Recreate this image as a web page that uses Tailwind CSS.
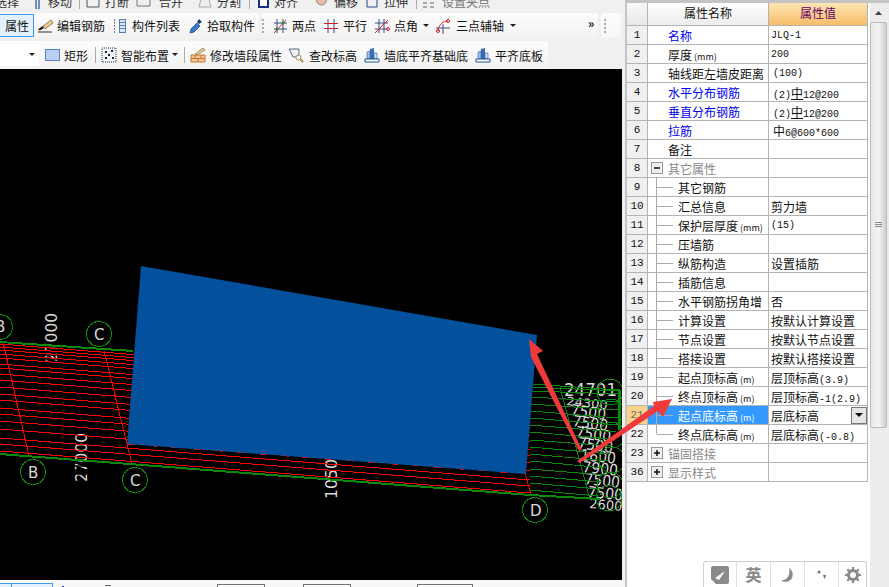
<!DOCTYPE html>
<html><head><meta charset="utf-8"><script src="https://cdn.jsdelivr.net/npm/@tailwindcss/browser@4"></script></head>
<body>
<div class="relative w-[889px] h-[587px] overflow-hidden flex bg-[#f0f0f0] font-['Noto_Sans_CJK_SC',sans-serif] text-[12px] leading-[19px] text-[#111]">

<!-- LEFT -->
<div class="w-[625px] h-full flex flex-col">
  <!-- clipped row -->
  <div class="h-[11px] pb-[2px] flex items-end overflow-hidden whitespace-nowrap leading-[14px] text-[#333]">
    <span class="w-[19px] shrink-0 flex justify-end">选择</span>
    <svg class="ml-[16px] shrink-0" width="6" height="14"><path d="M1 0v14M4 0v14" stroke="#6a8fc0" stroke-width="2"/></svg>
    <span class="ml-[7px]">移动</span>
    <i class="ml-[7px] w-px h-[11px] bg-[#aaa]"></i>
    <svg class="ml-[6px] shrink-0" width="14" height="14"><path d="M1 0v12h12V0" fill="none" stroke="#555"/></svg>
    <span class="ml-[5px]">打断</span>
    <svg class="ml-[6px] shrink-0" width="17" height="14"><path d="M2 0v11h13V0" fill="none" stroke="#777"/></svg>
    <span class="ml-[7px]">合并</span>
    <svg class="ml-[14px] shrink-0" width="16" height="14"><path d="M2 12h12L11 0H5z" fill="#eee" stroke="#aaa"/></svg>
    <span class="ml-[4px]">分割</span>
    <i class="ml-[8px] w-px h-[11px] bg-[#aaa]"></i>
    <svg class="ml-[8px] shrink-0" width="11" height="14"><path d="M1 0v12h9V0" fill="#fff" stroke="#1b2f80" stroke-width="2"/></svg>
    <span class="ml-[5px]">对齐</span>
    <svg class="ml-[18px] shrink-0" width="11" height="14"><circle cx="5.500" cy="5" r="5" fill="#e9b9a9" stroke="#888"/></svg>
    <span class="ml-[7px]">偏移</span>
    <svg class="ml-[8px] shrink-0" width="12" height="14"><path d="M1 0v12h10V0" fill="none" stroke="#224a80"/></svg>
    <span class="ml-[6px]">拉伸</span>
    <i class="ml-[8px] w-px h-[11px] bg-[#aaa]"></i>
    <svg class="ml-[5px] shrink-0" width="18" height="14"><path d="M1 8h4M8 8h4M1 12h4M8 12h4" stroke="#aaa" stroke-width="2"/></svg>
    <span class="ml-[2px] text-[#777]">设置夹点</span>
  </div>

  <!-- row 1 -->
  <div class="mt-[2px] h-[25px] flex whitespace-nowrap">
    <div class="w-[259px] h-full flex items-center rounded-r-[3px] bg-gradient-to-b from-[#fdfdfd] to-[#f2f2f2]">
      <div class="w-[34px] h-[23px] flex items-center pl-[5px] border border-l-0 border-[#3f9af2] bg-[#e4f1fc]">属性</div>
      <svg class="ml-[3px] shrink-0" width="17" height="16" viewBox="0 0 17 16"><path d="M1 12c3 1 4-1 6-2l-1-2c-2 1-4 2-5 4z" fill="#222"/><path d="M6 8l8-6 2 3-8 6z" fill="#e9c896" stroke="#8a6a40" stroke-width=".8"/><path d="M1 14h14" stroke="#333"/></svg>
      <span class="ml-[3px]">编辑钢筋</span>
      <svg class="ml-[8px] shrink-0" width="14" height="16" viewBox="0 0 14 16"><path d="M1 2h2M1 5h2M1 8h2M1 11h2M1 14h2" stroke="#555" stroke-width="1.500" stroke-dasharray="1 1"/><rect x="6.500" y="1.500" width="6" height="13" fill="#dbe8f7" stroke="#5a7fb0"/><path d="M7 4.500h5M7 7.500h5M7 10.500h5" stroke="#5a7fb0"/></svg>
      <span class="ml-[5px]">构件列表</span>
      <svg class="ml-[9px] shrink-0" width="14" height="16" viewBox="0 0 14 16"><path d="M1 15l1-4 6-6 3 3-6 6z" fill="#3a78c8" stroke="#1c4a90" stroke-width=".8"/><path d="M8 4l2-3 3 3-3 2z" fill="#1c3a70"/></svg>
      <span class="ml-[4px]">拾取构件</span>
    </div>
    <div class="ml-[3px] w-[336px] h-full flex items-center rounded-[3px] bg-gradient-to-b from-[#fdfdfd] to-[#f2f2f2]">
      <i class="w-[2px] h-[14px] border-l-2 border-dotted border-[#aaa]"></i>
      <svg class="ml-[9px] shrink-0" width="15" height="16" viewBox="0 0 15 16"><path d="M4 1v14M10 1v14M1 5h13M1 11h13" stroke="#3b4a80"/><path d="M1 15L13 2" stroke="#e02020"/><circle cx="10" cy="5" r="1.500" fill="#2a8a2a"/><circle cx="4" cy="11" r="1.500" fill="#2a8a2a"/></svg>
      <span class="ml-[4px]">两点</span>
      <svg class="ml-[8px] shrink-0" width="14" height="16" viewBox="0 0 14 16"><path d="M4 1v14M10 1v14" stroke="#3b4a90"/><path d="M0 5.500h14M0 10.500h14" stroke="#d02020"/></svg>
      <span class="ml-[5px]">平行</span>
      <svg class="ml-[8px] shrink-0" width="15" height="16" viewBox="0 0 15 16"><path d="M4 1v14M9 1v14M0 5h13M0 11h13" stroke="#3b4a80"/><path d="M0 15L13 2" stroke="#e02020"/><circle cx="13" cy="11" r="1.500" fill="none" stroke="#e02020"/></svg>
      <span class="ml-[4px]">点角</span>
      <svg class="ml-[5px] shrink-0" width="7" height="4"><path d="M0 0h6l-3 3z" fill="#222"/></svg>
      <svg class="ml-[6px] shrink-0" width="15" height="16" viewBox="0 0 15 16"><path d="M2 13C3 6 7 3 12 3" fill="none" stroke="#d02020"/><circle cx="2" cy="13" r="1.500" fill="none" stroke="#d02020"/><circle cx="12" cy="3" r="1.500" fill="none" stroke="#d02020"/><path d="M7 6v10M0 10h14" stroke="#3b4a80"/></svg>
      <span class="ml-[5px]">三点辅轴</span>
      <svg class="ml-[6px] shrink-0" width="7" height="4"><path d="M0 0h6l-3 3z" fill="#222"/></svg>
      <span class="ml-[71px] mb-[5px] text-[12px] font-bold leading-none">»</span>
    </div>
    <div class="ml-[3px] w-[20px] h-full flex items-center pl-[3px] rounded-[3px] bg-gradient-to-b from-[#fdfdfd] to-[#f6f6f6]">
      <i class="w-[2px] h-[14px] border-l-2 border-dotted border-[#aaa]"></i>
    </div>
  </div>

  <!-- row 2 -->
  <div class="mt-[3px] h-[28px] flex whitespace-nowrap">
    <div class="w-[548px] h-full flex items-center rounded-r-[3px] bg-gradient-to-b from-[#fdfdfd] to-[#f2f2f2]">
      <div class="w-[39px] h-[22px] flex items-center justify-end pr-[3px] bg-white"><svg width="7" height="4"><path d="M0 0h6l-3 3z" fill="#222"/></svg></div>
      <svg class="ml-[6px] shrink-0" width="15" height="12"><rect x=".5" y=".5" width="14" height="11" fill="#b9d0f2" stroke="#5b7fc0"/></svg>
      <span class="ml-[4px]">矩形</span>
      <i class="ml-[7px] w-px h-[16px] bg-[#aaa]"></i>
      <svg class="ml-[5px] shrink-0" width="16" height="16" viewBox="0 0 16 16"><rect x="1" y="1" width="14" height="14" fill="#eef3fa" stroke="#333" stroke-dasharray="1 1"/><path d="M4 5h2M10 4h2M7 8h2M4 11h2M11 11h2" stroke="#222" stroke-width="2"/></svg>
      <span class="ml-[4px]">智能布置</span>
      <svg class="ml-[3px] shrink-0" width="7" height="4"><path d="M0 0h6l-3 3z" fill="#222"/></svg>
      <i class="ml-[5px] w-px h-[16px] bg-[#aaa]"></i>
      <svg class="ml-[5px] shrink-0" width="16" height="16" viewBox="0 0 16 16"><path d="M1 8h14v7H1z" fill="#f2c79a" stroke="#c8752a"/><path d="M1 11.500h14M5 8v3.500M11 8v3.500M8 11.500V15" stroke="#c8752a"/><path d="M5 7l8-6 2 2-8 5z" fill="#e4cf9a" stroke="#8a7040" stroke-width=".7"/></svg>
      <span class="ml-[4px]">修改墙段属性</span>
      <svg class="ml-[6px] shrink-0" width="16" height="16" viewBox="0 0 16 16"><path d="M1 2h10v5l-3 3H5z" fill="#eef2f7" stroke="#5a6a80"/><circle cx="10.500" cy="10.500" r="2.500" fill="#fff" stroke="#a08850"/><path d="M12.500 12.500l2.500 2.500" stroke="#b08a40" stroke-width="2"/></svg>
      <span class="ml-[5px]">查改标高</span>
      <svg class="ml-[7px] shrink-0" width="16" height="16" viewBox="0 0 16 16"><path d="M6 2l4-1v11H6z" fill="#3a6fb8"/><path d="M3 5l3-1v8H3z" fill="#9cc0e8" stroke="#2a5a9a" stroke-width=".6"/><path d="M10 6h3v6h-3z" fill="#cfe0f4" stroke="#2a5a9a" stroke-width=".6"/><path d="M1 15v-3h14v3z" fill="#fff" stroke="#1f4f90"/></svg>
      <span class="ml-[4px]">墙底平齐基础底</span>
      <svg class="ml-[7px] shrink-0" width="16" height="16" viewBox="0 0 16 16"><path d="M6 2l4-1v11H6z" fill="#3a6fb8"/><path d="M3 5l3-1v8H3z" fill="#9cc0e8" stroke="#2a5a9a" stroke-width=".6"/><path d="M10 6h3v6h-3z" fill="#cfe0f4" stroke="#2a5a9a" stroke-width=".6"/><path d="M1 15v-3h14v3z" fill="#fff" stroke="#1f4f90"/></svg>
      <span class="ml-[4px]">平齐底板</span>
    </div>
  </div>

  <!-- canvas -->
  <div class="flex-1 mr-[3px] bg-black overflow-hidden">
    <svg width="622" height="511" viewBox="0 69 622 511" class="block">
      <g fill="#d9d9d9" font-family="'DejaVu Sans',sans-serif">
        <text transform="translate(57,362) rotate(-90)" font-size="16" textLength="49" lengthAdjust="spacingAndGlyphs">27000</text>
        <text transform="translate(87,482) rotate(-90)" font-size="16" textLength="49" lengthAdjust="spacingAndGlyphs">27000</text>
        <text transform="translate(337,499) rotate(-90)" font-size="16" textLength="40" lengthAdjust="spacingAndGlyphs">1050</text>
        <text x="564" y="396" font-size="17" textLength="53" lengthAdjust="spacingAndGlyphs">24701</text>
        <text transform="translate(566,405) rotate(6) scale(1,.9)" font-size="13">24300</text>
        <text transform="translate(570,415) rotate(8) scale(1,1.100)" font-size="14">7500</text>
        <text transform="translate(572,426) rotate(8) scale(1,1.100)" font-size="14">7500</text>
        <text transform="translate(575,437) rotate(8) scale(1,1.100)" font-size="14">7500</text>
        <text transform="translate(577,448) rotate(8) scale(1,1.100)" font-size="14">7500</text>
        <text transform="translate(580,460) rotate(6) scale(1,1.100)" font-size="14">1600</text>
        <text transform="translate(582,472) rotate(6) scale(1,1.100)" font-size="14">7900</text>
        <text transform="translate(584,484) rotate(6) scale(1,1.100)" font-size="14">7500</text>
        <text transform="translate(587,497) rotate(6) scale(1,1.100)" font-size="14">7500</text>
        <text transform="translate(589,508) rotate(5)" font-size="13">2600</text>
      </g>
      <path d="M44 347h16M44 351h16M44 355h16M44 359h16M74 466h16M74 470h16M74 474h16" stroke="#000" stroke-width="1.500"/>
      <g stroke="#ff0000" stroke-width="1" shape-rendering="crispEdges" fill="none">
        <path d="M0 344L530 386M0 347L530 389M0 350L530 392M0 354L530 396M0 358L530 400M0 364L530 406M0 368L530 410M0 374L530 416M0 380L530 422M0 387L530 429M0 394L530 436M0 400L530 442M0 408L530 450M0 414L530 456M0 421L530 463M0 429L530 471M0 438L530 480M0 444L530 486M0 451L530 493"/>
        <path d="M3 342L29 456M104 351L132 464M524 470L531 494"/>
        <path d="M127 444L526 474" stroke-dasharray="8 14"/>
      </g>
      <g stroke="#0a8a0a" fill="none" shape-rendering="crispEdges">
        <path d="M0 342L133 351" stroke-width="2"/>
        <path d="M0 454L530 495L600 499" stroke-width="2"/>
        <path d="M530 384L620 390M530 387L620 391M530 391L620 394M530 397L620 402M530 404L618 410M530 411L618 418M530 418L618 425M530 425L616 432M530 432L612 439M530 440L612 446M530 447L610 454M530 454L608 461M530 461L606 468M530 469L604 475M530 476L602 482M530 483L600 489M530 490L598 496" stroke-width="1"/>
        <path d="M560 387L590 500"/>
        <circle cx="0" cy="327" r="12.500"/><circle cx="99" cy="334" r="12.500"/>
        <circle cx="33" cy="472" r="12.500"/><circle cx="135" cy="480" r="12.500"/>
        <circle cx="535" cy="510" r="12.500"/>
        <circle cx="610" cy="392" r="13"/><circle cx="611" cy="412" r="13"/><circle cx="612" cy="435" r="13"/><circle cx="612" cy="460" r="13"/><circle cx="610" cy="485" r="13"/><circle cx="609" cy="498" r="13"/>
      </g>
      <path d="M618 390h3v40h-3z" fill="#0a8a0a"/>
      <polygon points="141,266 537,335 526,474 127,444" fill="#03509c"/>
      <g fill="#d9d9d9" font-family="'DejaVu Sans',sans-serif">
        <text x="-5" y="332" font-size="15">B</text>
        <text x="94" y="340" font-size="15">C</text>
        <text x="28" y="478" font-size="15">B</text>
        <text x="130" y="486" font-size="15">C</text>
        <text x="530" y="516" font-size="15">D</text>
      </g>
    </svg>
  </div>

  <!-- bottom strip -->
  <div class="h-[7px] flex overflow-hidden bg-[#f8f8f8]">
    <div class="mt-[3px] w-[53px] h-[4px] flex border-t border-r border-[#3f9af2] bg-[#e4f1fc]"><i class="ml-[11px] w-px bg-[#3f9af2]"></i></div>
    <i class="ml-[9px] mt-[6px] w-[2px] h-px bg-[#1c4fc0]"></i>
    <i class="ml-[41px] mt-[5px] w-[6px] h-px bg-[#666]"></i>
    <div class="ml-[106px] mt-[4px] w-[48px] h-[3px] border border-b-0 border-[#707070] bg-white"></div>
    <div class="ml-[38px] mt-[4px] w-[48px] h-[3px] border border-b-0 border-[#707070] bg-white"></div>
    <div class="ml-[66px] mt-[4px] w-[56px] h-[3px] border border-b-0 border-[#707070] bg-white"></div>
  </div>
</div>

<!-- RIGHT -->
<div class="w-[264px] h-full flex bg-white border-l-2 border-[#c4c4c4] border-t-[3px]">
  <div class="w-[241px] flex flex-col">
    <div class="h-[23px] flex border-b border-[#b4b4b4]">
      <div class="w-[21px] border-r border-[#b4b4b4] bg-gradient-to-b from-[#f8f8f8] to-[#e8e8e8]"></div>
      <div class="w-[121px] border-r border-[#b4b4b4] text-center bg-gradient-to-b from-white to-[#ececec]">属性名称</div>
      <div class="w-[99px] border-r border-[#b4b4b4] text-center text-[#660066] bg-gradient-to-b from-[#fde6b2] to-[#f5bd68]">属性值</div>
    </div>
    <!-- rows -->
    <div class="h-[19px] flex border-b border-[#b4b4b4]"><div class="w-[21px] border-r border-[#b4b4b4] bg-[#f0f0f0] text-center font-['Liberation_Mono',monospace] text-[11px]">1</div><div class="w-[121px] pl-[20px] border-r border-[#b4b4b4] text-[#0000ee]">名称</div><div class="w-[99px] pl-[2px] border-r border-[#b4b4b4] font-['Liberation_Mono',monospace] text-[10px]">JLQ-1</div></div>
    <div class="h-[19px] flex border-b border-[#b4b4b4]"><div class="w-[21px] border-r border-[#b4b4b4] bg-[#f0f0f0] text-center font-['Liberation_Mono',monospace] text-[11px]">2</div><div class="w-[121px] pl-[20px] border-r border-[#b4b4b4]">厚度<span class="text-[9px] ml-[2px]">(mm)</span></div><div class="w-[99px] pl-[2px] border-r border-[#b4b4b4] font-['Liberation_Mono',monospace] text-[10px]">200</div></div>
    <div class="h-[19px] flex border-b border-[#b4b4b4]"><div class="w-[21px] border-r border-[#b4b4b4] bg-[#f0f0f0] text-center font-['Liberation_Mono',monospace] text-[11px]">3</div><div class="w-[121px] pl-[20px] border-r border-[#b4b4b4] whitespace-nowrap">轴线距左墙皮距离</div><div class="w-[99px] pl-[4px] border-r border-[#b4b4b4] font-['Liberation_Mono',monospace] text-[10px]">(100)</div></div>
    <div class="h-[19px] flex border-b border-[#b4b4b4]"><div class="w-[21px] border-r border-[#b4b4b4] bg-[#f0f0f0] text-center font-['Liberation_Mono',monospace] text-[11px]">4</div><div class="w-[121px] pl-[20px] border-r border-[#b4b4b4] text-[#0000ee]">水平分布钢筋</div><div class="w-[99px] pl-[4px] border-r border-[#b4b4b4] font-['Liberation_Mono',monospace] text-[10px]">(2)<span class="text-[12px] underline font-['Noto_Sans_CJK_SC']">中</span>12@200</div></div>
    <div class="h-[19px] flex border-b border-[#b4b4b4]"><div class="w-[21px] border-r border-[#b4b4b4] bg-[#f0f0f0] text-center font-['Liberation_Mono',monospace] text-[11px]">5</div><div class="w-[121px] pl-[20px] border-r border-[#b4b4b4] text-[#0000ee]">垂直分布钢筋</div><div class="w-[99px] pl-[4px] border-r border-[#b4b4b4] font-['Liberation_Mono',monospace] text-[10px]">(2)<span class="text-[12px] underline font-['Noto_Sans_CJK_SC']">中</span>12@200</div></div>
    <div class="h-[19px] flex border-b border-[#b4b4b4]"><div class="w-[21px] border-r border-[#b4b4b4] bg-[#f0f0f0] text-center font-['Liberation_Mono',monospace] text-[11px]">6</div><div class="w-[121px] pl-[20px] border-r border-[#b4b4b4] text-[#0000ee]">拉筋</div><div class="w-[99px] pl-[4px] border-r border-[#b4b4b4] font-['Liberation_Mono',monospace] text-[10px]"><span class="text-[12px] font-['Noto_Sans_CJK_SC']">中</span>6@600*600</div></div>
    <div class="h-[19px] flex border-b border-[#b4b4b4]"><div class="w-[21px] border-r border-[#b4b4b4] bg-[#f0f0f0] text-center font-['Liberation_Mono',monospace] text-[11px]">7</div><div class="w-[121px] pl-[20px] border-r border-[#b4b4b4]">备注</div><div class="w-[99px] border-r border-[#b4b4b4]"></div></div>
    <div class="h-[19px] flex border-b border-[#b4b4b4]"><div class="w-[21px] border-r border-[#b4b4b4] bg-[#f0f0f0] text-center font-['Liberation_Mono',monospace] text-[11px]">8</div><div class="relative w-[121px] pl-[20px] border-r border-[#b4b4b4] text-[#888]"><svg class="absolute left-[3px] top-[3px]" width="12" height="12"><rect x=".5" y=".5" width="11" height="11" fill="#eee" stroke="#999"/><path d="M3 6h6" stroke="#111" stroke-width="1.500"/></svg>其它属性</div><div class="w-[99px] border-r border-[#b4b4b4]"></div></div>
    <div class="h-[19px] flex border-b border-[#b4b4b4]"><div class="w-[21px] border-r border-[#b4b4b4] bg-[#f0f0f0] text-center font-['Liberation_Mono',monospace] text-[11px]">9</div><div class="relative w-[121px] pl-[30px] border-r border-[#b4b4b4]"><i class="absolute left-[8px] top-[-1px] h-[20px] w-px bg-[#aaa]"></i><i class="absolute left-[9px] top-[9px] w-[16px] h-px bg-[#aaa]"></i>其它钢筋</div><div class="w-[99px] border-r border-[#b4b4b4]"></div></div>
    <div class="h-[19px] flex border-b border-[#b4b4b4]"><div class="w-[21px] border-r border-[#b4b4b4] bg-[#f0f0f0] text-center font-['Liberation_Mono',monospace] text-[11px]">10</div><div class="relative w-[121px] pl-[30px] border-r border-[#b4b4b4]"><i class="absolute left-[8px] top-[-1px] h-[20px] w-px bg-[#aaa]"></i><i class="absolute left-[9px] top-[9px] w-[16px] h-px bg-[#aaa]"></i>汇总信息</div><div class="w-[99px] pl-[2px] border-r border-[#b4b4b4]">剪力墙</div></div>
    <div class="h-[19px] flex border-b border-[#b4b4b4]"><div class="w-[21px] border-r border-[#b4b4b4] bg-[#f0f0f0] text-center font-['Liberation_Mono',monospace] text-[11px]">11</div><div class="relative w-[121px] pl-[30px] border-r border-[#b4b4b4] whitespace-nowrap"><i class="absolute left-[8px] top-[-1px] h-[20px] w-px bg-[#aaa]"></i><i class="absolute left-[9px] top-[9px] w-[16px] h-px bg-[#aaa]"></i>保护层厚度<span class="text-[9px] ml-[2px]">(mm)</span></div><div class="w-[99px] pl-[2px] border-r border-[#b4b4b4] font-['Liberation_Mono',monospace] text-[10px]">(15)</div></div>
    <div class="h-[19px] flex border-b border-[#b4b4b4]"><div class="w-[21px] border-r border-[#b4b4b4] bg-[#f0f0f0] text-center font-['Liberation_Mono',monospace] text-[11px]">12</div><div class="relative w-[121px] pl-[30px] border-r border-[#b4b4b4]"><i class="absolute left-[8px] top-[-1px] h-[20px] w-px bg-[#aaa]"></i><i class="absolute left-[9px] top-[9px] w-[16px] h-px bg-[#aaa]"></i>压墙筋</div><div class="w-[99px] border-r border-[#b4b4b4]"></div></div>
    <div class="h-[19px] flex border-b border-[#b4b4b4]"><div class="w-[21px] border-r border-[#b4b4b4] bg-[#f0f0f0] text-center font-['Liberation_Mono',monospace] text-[11px]">13</div><div class="relative w-[121px] pl-[30px] border-r border-[#b4b4b4]"><i class="absolute left-[8px] top-[-1px] h-[20px] w-px bg-[#aaa]"></i><i class="absolute left-[9px] top-[9px] w-[16px] h-px bg-[#aaa]"></i>纵筋构造</div><div class="w-[99px] pl-[2px] border-r border-[#b4b4b4]">设置插筋</div></div>
    <div class="h-[19px] flex border-b border-[#b4b4b4]"><div class="w-[21px] border-r border-[#b4b4b4] bg-[#f0f0f0] text-center font-['Liberation_Mono',monospace] text-[11px]">14</div><div class="relative w-[121px] pl-[30px] border-r border-[#b4b4b4]"><i class="absolute left-[8px] top-[-1px] h-[20px] w-px bg-[#aaa]"></i><i class="absolute left-[9px] top-[9px] w-[16px] h-px bg-[#aaa]"></i>插筋信息</div><div class="w-[99px] border-r border-[#b4b4b4]"></div></div>
    <div class="h-[19px] flex border-b border-[#b4b4b4]"><div class="w-[21px] border-r border-[#b4b4b4] bg-[#f0f0f0] text-center font-['Liberation_Mono',monospace] text-[11px]">15</div><div class="relative w-[121px] pl-[30px] border-r border-[#b4b4b4] whitespace-nowrap"><i class="absolute left-[8px] top-[-1px] h-[20px] w-px bg-[#aaa]"></i><i class="absolute left-[9px] top-[9px] w-[16px] h-px bg-[#aaa]"></i>水平钢筋拐角增</div><div class="w-[99px] pl-[2px] border-r border-[#b4b4b4]">否</div></div>
    <div class="h-[19px] flex border-b border-[#b4b4b4]"><div class="w-[21px] border-r border-[#b4b4b4] bg-[#f0f0f0] text-center font-['Liberation_Mono',monospace] text-[11px]">16</div><div class="relative w-[121px] pl-[30px] border-r border-[#b4b4b4]"><i class="absolute left-[8px] top-[-1px] h-[20px] w-px bg-[#aaa]"></i><i class="absolute left-[9px] top-[9px] w-[16px] h-px bg-[#aaa]"></i>计算设置</div><div class="w-[99px] pl-[2px] border-r border-[#b4b4b4] whitespace-nowrap">按默认计算设置</div></div>
    <div class="h-[19px] flex border-b border-[#b4b4b4]"><div class="w-[21px] border-r border-[#b4b4b4] bg-[#f0f0f0] text-center font-['Liberation_Mono',monospace] text-[11px]">17</div><div class="relative w-[121px] pl-[30px] border-r border-[#b4b4b4]"><i class="absolute left-[8px] top-[-1px] h-[20px] w-px bg-[#aaa]"></i><i class="absolute left-[9px] top-[9px] w-[16px] h-px bg-[#aaa]"></i>节点设置</div><div class="w-[99px] pl-[2px] border-r border-[#b4b4b4] whitespace-nowrap">按默认节点设置</div></div>
    <div class="h-[19px] flex border-b border-[#b4b4b4]"><div class="w-[21px] border-r border-[#b4b4b4] bg-[#f0f0f0] text-center font-['Liberation_Mono',monospace] text-[11px]">18</div><div class="relative w-[121px] pl-[30px] border-r border-[#b4b4b4]"><i class="absolute left-[8px] top-[-1px] h-[20px] w-px bg-[#aaa]"></i><i class="absolute left-[9px] top-[9px] w-[16px] h-px bg-[#aaa]"></i>搭接设置</div><div class="w-[99px] pl-[2px] border-r border-[#b4b4b4] whitespace-nowrap">按默认搭接设置</div></div>
    <div class="h-[19px] flex border-b border-[#b4b4b4]"><div class="w-[21px] border-r border-[#b4b4b4] bg-[#f0f0f0] text-center font-['Liberation_Mono',monospace] text-[11px]">19</div><div class="relative w-[121px] pl-[30px] border-r border-[#b4b4b4] whitespace-nowrap"><i class="absolute left-[8px] top-[-1px] h-[20px] w-px bg-[#aaa]"></i><i class="absolute left-[9px] top-[9px] w-[16px] h-px bg-[#aaa]"></i>起点顶标高<span class="text-[9px] ml-[2px]">(m)</span></div><div class="w-[99px] pl-[2px] border-r border-[#b4b4b4] whitespace-nowrap">层顶标高<span class="font-['Liberation_Mono',monospace] text-[10px]">(3.9)</span></div></div>
    <div class="h-[19px] flex border-b border-[#b4b4b4]"><div class="w-[21px] border-r border-[#b4b4b4] bg-[#f0f0f0] text-center font-['Liberation_Mono',monospace] text-[11px]">20</div><div class="relative w-[121px] pl-[30px] border-r border-[#b4b4b4] whitespace-nowrap"><i class="absolute left-[8px] top-[-1px] h-[20px] w-px bg-[#aaa]"></i><i class="absolute left-[9px] top-[9px] w-[16px] h-px bg-[#aaa]"></i>终点顶标高<span class="text-[9px] ml-[2px]">(m)</span></div><div class="w-[99px] pl-[2px] border-r border-[#b4b4b4] whitespace-nowrap">层顶标高<span class="font-['Liberation_Mono',monospace] text-[10px]">-1(2.9)</span></div></div>
    <div class="h-[19px] flex border-b border-[#b4b4b4]"><div class="w-[21px] border-r border-[#b4b4b4] bg-[#fbd28c] text-[#666] text-center font-['Liberation_Mono',monospace] text-[11px]">21</div><div class="relative w-[121px] pl-[30px] border-r border-[#b4b4b4] whitespace-nowrap bg-[#3399ff] text-white"><i class="absolute left-[8px] top-[-1px] h-[20px] w-px bg-[#aaa]"></i><i class="absolute left-[9px] top-[9px] w-[16px] h-px bg-[#aaa]"></i>起点底标高<span class="text-[9px] ml-[2px]">(m)</span></div><div class="relative w-[99px] pl-[2px] border-r border-[#b4b4b4]">层底标高<div class="absolute right-0 top-[1px] w-[16px] h-[17px] flex items-center justify-center border border-[#777] bg-[#e6e6e6]"><svg width="8" height="5"><path d="M0 0h8l-4 4z" fill="#111"/></svg></div></div></div>
    <div class="h-[19px] flex border-b border-[#b4b4b4]"><div class="w-[21px] border-r border-[#b4b4b4] bg-[#f0f0f0] text-center font-['Liberation_Mono',monospace] text-[11px]">22</div><div class="relative w-[121px] pl-[30px] border-r border-[#b4b4b4] whitespace-nowrap"><i class="absolute left-[8px] top-[-1px] h-[10px] w-px bg-[#aaa]"></i><i class="absolute left-[9px] top-[9px] w-[16px] h-px bg-[#aaa]"></i>终点底标高<span class="text-[9px] ml-[2px]">(m)</span></div><div class="w-[99px] pl-[2px] border-r border-[#b4b4b4] whitespace-nowrap">层底标高<span class="font-['Liberation_Mono',monospace] text-[10px]">(-0.8)</span></div></div>
    <div class="h-[19px] flex border-b border-[#b4b4b4]"><div class="w-[21px] border-r border-[#b4b4b4] bg-[#f0f0f0] text-center font-['Liberation_Mono',monospace] text-[11px]">23</div><div class="relative w-[121px] pl-[20px] border-r border-[#b4b4b4] text-[#888]"><svg class="absolute left-[3px] top-[3px]" width="12" height="12"><rect x=".5" y=".5" width="11" height="11" fill="#eee" stroke="#999"/><path d="M3 6h6M6 3v6" stroke="#111" stroke-width="1.500"/></svg>锚固搭接</div><div class="w-[99px] border-r border-[#b4b4b4]"></div></div>
    <div class="h-[19px] flex border-b border-[#b4b4b4]"><div class="w-[21px] border-r border-[#b4b4b4] bg-[#f0f0f0] text-center font-['Liberation_Mono',monospace] text-[11px]">36</div><div class="relative w-[121px] pl-[20px] border-r border-[#b4b4b4] text-[#888]"><svg class="absolute left-[3px] top-[3px]" width="12" height="12"><rect x=".5" y=".5" width="11" height="11" fill="#eee" stroke="#999"/><path d="M3 6h6M6 3v6" stroke="#111" stroke-width="1.500"/></svg>显示样式</div><div class="w-[99px] border-r border-[#b4b4b4]"></div></div>
  </div>
  <!-- scrollbar -->
  <div class="ml-[2px] w-[19px] h-full flex flex-col bg-[#ececec]">
    <div class="h-[19px] w-[17px] flex items-center justify-center"><svg width="7" height="4"><path d="M0 4h7L3.500 0z" fill="#444"/></svg></div>
    <div class="w-[17px] h-[406px] flex items-center justify-center rounded-[2px] border border-[#bbb] bg-gradient-to-r from-[#e8e8e8] via-[#f4f4f4] to-[#cfcfcf]"><svg width="7" height="6"><path d="M0 .5h7M0 2.500h7M0 4.500h7" stroke="#888"/></svg></div>
  </div>
</div>

<!-- arrows overlay -->
<svg class="absolute left-0 top-0 pointer-events-none" width="889" height="587">
  <polygon points="529,339 543,351 537,354 582,450 579,451 531,357" fill="#ee3a3a"/>
  <polygon points="672,399 663,417 658,411 580,463 577,461 654,406 653,402" fill="#ee3a3a"/>
</svg>

<!-- IME bar -->
<div class="absolute left-[703px] top-[561px] w-[164px] h-[26px] flex rounded-t-[3px] border border-b-0 border-[#cfcfcf] bg-white text-[#888]">
  <div class="w-[33px] flex items-center justify-center border-r border-[#e0e0e0]"><svg width="18" height="18" viewBox="0 0 18 18"><path d="M2 0h14a2 2 0 0 1 2 2v14a2 2 0 0 1-2 2H5l-5-5V2a2 2 0 0 1 2-2z" fill="#8a8a8a"/><path d="M4 12l10-7-6 9z" fill="#fff"/></svg></div>
  <div class="w-[34px] flex items-center justify-center border-r border-[#e0e0e0] text-[16px] font-bold">英</div>
  <div class="w-[34px] flex items-center justify-center border-r border-[#e0e0e0]"><svg width="16" height="16" viewBox="0 0 16 16"><path d="M9 1c5 3 5 10 0 13-3 1.500-6 1-8-1 5 1 10-4 8-12z" fill="#8a8a8a"/></svg></div>
  <div class="w-[34px] flex items-center justify-center border-r border-[#e0e0e0]"><svg width="10" height="10" viewBox="0 0 10 10"><circle cx="2" cy="2" r="1.500" fill="#777"/><path d="M6 5h3l-1 4-1-1z" fill="#777"/></svg></div>
  <div class="flex-1 flex items-center justify-center"><svg width="16" height="16" viewBox="0 0 16 16"><circle cx="8" cy="8" r="4.500" fill="none" stroke="#8a8a8a" stroke-width="3"/><path d="M8 0v3M8 13v3M0 8h3M13 8h3M2.300 2.300l2 2M11.700 11.700l2 2M2.300 13.700l2-2M11.700 4.300l2-2" stroke="#8a8a8a" stroke-width="2.200"/></svg></div>
</div>
</div>
</body></html>
